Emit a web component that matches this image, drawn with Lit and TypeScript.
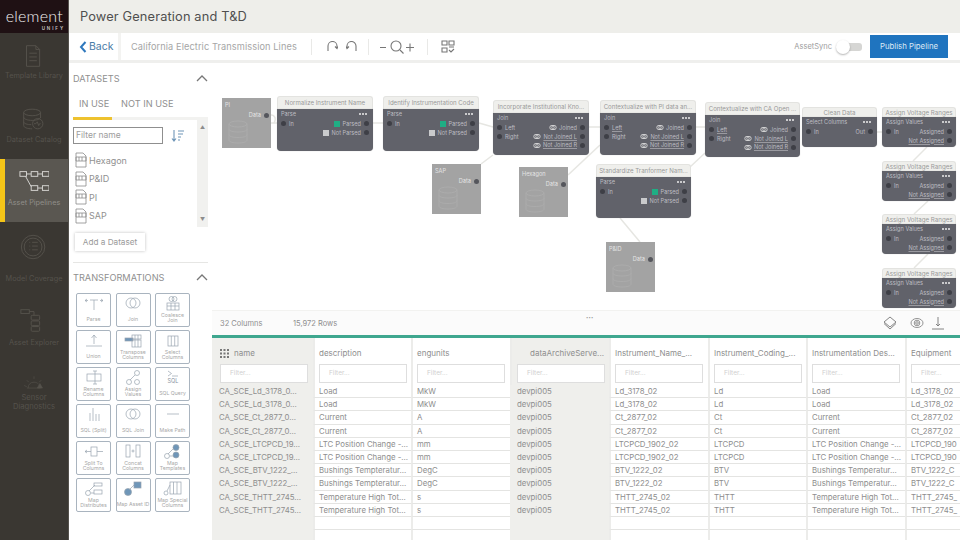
import { LitElement, html, css, svg } from 'lit';
import { customElement, property } from 'lit/decorators.js';

const FONT = css`Inter, 'Liberation Sans', sans-serif`;

// ---- left rail ----
const railItems = [
  {
    key: 't', label: ['Template Library'],
    icon: svg`<path d="M8 2h10l4 4v18H8z"/><path d="M18 2v4h4M11 10h8M11 14h8M11 18h8"/>`,
  },
  {
    key: 'd', label: ['Dataset Catalog'],
    icon: svg`<ellipse cx="14" cy="6" rx="9" ry="3.5"/><path d="M5 6v14c0 2 4 3.500 9 3.500M23 6v6M5 11c0 2 4 3.500 9 3.500s9-1.500 9-3.500M5 16c0 2 4 3 8 3"/><circle cx="20" cy="18" r="5.500"/><path d="M16 18h2l1.500-2 1.500 4 1-2h1"/>`,
  },
  {
    key: 'p', label: ['Asset Pipelines'],
    icon: svg`<rect x="1" y="3" width="7" height="5"/><rect x="13" y="3" width="7" height="5"/><rect x="25" y="3" width="7" height="5"/><path d="M8 5.500h5M20 5.500h5M7 8l6 11"/><rect x="13" y="18" width="7" height="5"/><rect x="25" y="18" width="7" height="5"/><path d="M20 20.500h5"/>`,
  },
  {
    key: 'm', label: ['Model Coverage'],
    icon: svg`<circle cx="15" cy="13" r="12.500"/><circle cx="15" cy="13" r="9.500"/><path d="M11 8h1M14 8h6M11 12h1M14 12h6M11 16h1M14 16h6"/>`,
  },
  {
    key: 'e', label: ['Asset Explorer'],
    icon: svg`<rect x="2" y="2" width="9" height="4"/><path d="M11 4h5v4"/><rect x="13" y="8" width="9" height="5" rx="1"/><rect x="13" y="14" width="9" height="5" rx="1"/><rect x="13" y="20" width="9" height="5" rx="1"/>`,
  },
  {
    key: 's', label: ['Sensor', 'Diagnostics'],
    icon: svg`<path d="M7 20c0-6 4-9 9-9 3 0 5 1 7 3M5 20h21M1 16l4 2M5 8l3 3M16 2v4M27 8l-3 3"/><path d="M25 13l4 7h-8z" fill="currentColor"/>`,
  },
];

@customElement('nav-rail')
export class NavRail extends LitElement {
  static styles = css`
    :host {
      display: block;
      width: 69px;
      height: 540px;
      background: #3a3732;
      border-right: 1px solid #55524d;
      box-sizing: border-box;
      font-family: ${FONT};
      overflow: hidden;
    }
    .logo {
      height: 33px;
      background: #1f1114;
      color: #f2f2f2;
      display: flex;
      flex-direction: column;
      align-items: flex-end;
      padding: 6px 5px 0 0;
      box-sizing: border-box;
    }
    .logo b {
      font: 300 16px/20px Lato, sans-serif;
      letter-spacing: 0.25px;
    }
    .logo i {
      font: 600 4.5px/5px ${FONT};
      letter-spacing: 1.9px;
      margin-right: -2px;
      color: #c9c5c5;
    }
    .item {
      height: 63px;
      box-sizing: border-box;
      display: flex;
      flex-direction: column;
      align-items: center;
      color: #55524c;
      font-size: 7.3px;
      line-height: 10px;
      white-space: nowrap;
      position: relative;
    }
    .item svg {
      width: 30px;
      height: 26px;
      fill: none;
      stroke: currentColor;
      stroke-width: 1;
    }
    .item.t { padding-top: 10px; gap: 2px; }
    .item.d { padding-top: 10px; gap: 3px; }
    .item.p { padding-top: 9px; gap: 4px; background: #5a5751; color: #908e89; }
    .item.p svg { color: #d8d7d4; }
    .item.p::before {
      content: '';
      position: absolute;
      left: 0;
      top: 0;
      bottom: 0;
      width: 5px;
      background: #f5c518;
    }
    .item.m { padding-top: 12px; gap: 14px; }
    .item.e { padding-top: 22px; gap: 5px; }
    .item.s { padding-top: 27px; gap: 1px; font-size: 7.6px; }
    .item span { display: block; text-align: center; }
    .item.s span { line-height: 9px; }
  `;

  render() {
    return html`
      <div class="logo"><b>element</b><i>UNIFY</i></div>
      ${railItems.map(
        (it) => html`
          <div class="item ${it.key}">
            <svg viewBox="0 0 32 26">${it.icon}</svg>
            <span>${it.label.map((l) => html`${l}<br />`)}</span>
          </div>
        `,
      )}
    `;
  }
}

// ---- datasets + transformations ----
const datasets = ['Hexagon', 'P&ID', 'PI', 'SAP'];

const blue = '#6f96b8';
const transforms = [
  { label: ['Parse'], icon: svg`<path d="M10 4v10M6 4h8M3 3l-2 1.500L3 6M17 3l2 1.500L17 6M1 4.500h3M16 4.500h3"/>` },
  { label: ['Join'], icon: svg`<circle cx="8" cy="7" r="5"/><circle cx="12" cy="7" r="5"/>` },
  { label: ['Coalesce', 'Join'], icon: svg`<circle cx="8.500" cy="3" r="2.500"/><circle cx="11.500" cy="3" r="2.500"/><rect x="4" y="7" width="12" height="7"/><path d="M8 7v7M12 7v7M4 10h12"/>` },
  { label: ['Union'], icon: svg`<path d="M2 13h16M10 11V2M7.500 5L10 2l2.500 3"/>` },
  { label: ['Transpose', 'Columns'], icon: svg`<rect x="2" y="5" width="8" height="3" fill="${blue}"/><rect x="9" y="2" width="9" height="4"/><rect x="9" y="7" width="9" height="7"/><path d="M12 2v12M15 2v12"/>` },
  { label: ['Select', 'Columns'], icon: svg`<rect x="5" y="3" width="10" height="10"/><path d="M8.300 3v10M11.700 3v10"/>` },
  { label: ['Rename', 'Columns'], icon: svg`<rect x="3" y="4" width="14" height="7"/><path d="M11 1v13M9 1h4M9 14h4"/>` },
  { label: ['Assign', 'Values'], icon: svg`<circle cx="6" cy="12" r="2.500"/><circle cx="14" cy="3" r="2.500"/><circle cx="14" cy="12" r="2.500"/><path d="M7 10l5-5"/>` },
  { label: ['SQL Query'], icon: svg`<path d="M5 1l3.500 2.500L5 6M9 6h6"/><text x="10" y="13" text-anchor="middle" font-size="5.500" fill="#8893a0" stroke="none">SQL</text>` },
  { label: ['SQL (Split)'], icon: svg`<path d="M6 14V6M9 14V1M12 14V7M15 14V7"/>` },
  { label: ['SQL Join'], icon: svg`<circle cx="8" cy="7" r="5"/><circle cx="12" cy="7" r="5"/>` },
  { label: ['Make Path'], icon: svg`<path d="M4 7h12"/>` },
  { label: ['Split To', 'Columns'], icon: svg`<rect x="7" y="3" width="6" height="9"/><path d="M1 7.500h6M13 7.500h6M3 6l-2 1.500L3 9"/>` },
  { label: ['Concat', 'Columns'], icon: svg`<rect x="3" y="1" width="4" height="12"/><rect x="13" y="1" width="4" height="12"/><path d="M8.500 7h3M10 5.500v3"/>` },
  { label: ['Map', 'Templates'], icon: svg`<circle cx="4" cy="12" r="2.500"/><path d="M5 10l6-6M11 12H7"/><circle cx="13" cy="3.500" r="3" fill="${blue}"/><circle cx="13" cy="11" r="3" fill="${blue}"/>` },
  { label: ['Map', 'Distributes'], icon: svg`<circle cx="4" cy="12" r="2.500"/><path d="M5 10l6-6"/><rect x="10" y="2" width="8" height="3"/><rect x="10" y="9" width="8" height="4"/><path d="M7 12h3"/>` },
  { label: ['Map Asset ID'], icon: svg`<circle cx="5" cy="11" r="3.500" fill="${blue}"/><path d="M6 9l5-5"/><rect x="11" y="1" width="7" height="6" fill="${blue}"/>` },
  { label: ['Map Special', 'Columns'], icon: svg`<circle cx="3" cy="12" r="2"/><path d="M4 10l3-6"/><rect x="7" y="1" width="11" height="12"/><path d="M10.500 1v12M14 1v12"/>` },
];

@customElement('dataset-panel')
export class DatasetPanel extends LitElement {
  static styles = css`
    :host {
      display: block;
      width: 143px;
      box-sizing: border-box;
      padding: 0 4px 0 4px;
      font-family: ${FONT};
      color: #9a9a9a;
      background: #fff;
    }
    .section {
      display: flex;
      justify-content: space-between;
      align-items: center;
      font-size: 9.2px;
      height: 12px;
      color: #8f8f8f;
    }
    .section svg { width: 12px; height: 7px; fill: none; stroke: #777; stroke-width: 1.300; }
    .datasets { padding-top: 9px; }
    .tabs {
      display: flex;
      font-size: 9.2px;
      margin-top: 12px;
      height: 21px;
      align-items: flex-start;
      padding-top: 2px;
      box-sizing: border-box;
      color: #8f8f8f;
    }
    .tabs span:first-child { width: 48px; padding-left: 6px; box-sizing: border-box; }
    .bar { display: flex; height: 3px; background: #f2f2f0; width: 135px; }
    .bar i { width: 39px; background: #eec22f; }
    .list { display: flex; width: 135px; height: 107px; }
    .list-main { flex: 1; padding-top: 7px; }
    .filter { display: flex; align-items: center; gap: 8px; }
    .filter div {
      width: 90px;
      height: 17px;
      box-sizing: border-box;
      border: 1px solid #8f8f8f;
      font-size: 8.5px;
      line-height: 15px;
      padding-left: 2px;
      color: #9c9c9c;
    }
    .filter svg { width: 14px; height: 14px; fill: none; stroke: #6f96b8; stroke-width: 1.100; }
    .ds { display: flex; align-items: center; gap: 2px; font-size: 9px; height: 18.500px; color: #919191; padding-left: 2px; }
    .ds-list { margin-top: 7px; }
    .ds svg { width: 12px; height: 16px; fill: #fff; stroke: #8a8a8a; stroke-width: 0.800; }
    .scroll {
      width: 11px;
      background: #f1f1ef;
      display: flex;
      flex-direction: column;
      justify-content: space-between;
      align-items: center;
      padding: 5px 0;
      box-sizing: border-box;
      color: #8c8c8c;
      font-size: 5px;
      line-height: 5px;
    }
    .add {
      display: inline-block;
      margin: 6px 0 0 2px;
      width: 70px;
      height: 18px;
      line-height: 18px;
      text-align: center;
      font-size: 8.2px;
      color: #9a9a9a;
      box-shadow: 0 0 3px rgba(0, 0, 0, 0.25);
    }
    hr { border: 0; border-top: 1px solid #e6e6e4; margin: 11px 0 0; width: 135px; }
    .trans { margin-top: 8px; }
    .grid {
      display: grid;
      grid-template-columns: repeat(3, 35px);
      grid-auto-rows: 34px;
      column-gap: 4.500px;
      row-gap: 3px;
      margin: 10px 0 0 3px;
    }
    .tile {
      border: 1px solid #a9b4bf;
      border-radius: 2px;
      box-sizing: border-box;
      display: flex;
      flex-direction: column;
      align-items: center;
      padding-top: 2px;
      font-size: 5.2px;
      line-height: 5.500px;
      color: #a8a8a8;
      text-align: center;
      white-space: nowrap;
      overflow: hidden;
    }
    .tile svg { width: 20px; height: 15px; flex: none; fill: none; stroke: #98a3af; stroke-width: 0.700; margin-bottom: 1.500px; }
    .tile span.single { margin-top: 4px; }
  `;

  render() {
    return html`
      <div class="datasets section">
        <span>DATASETS</span>
        <svg viewBox="0 0 12 7"><path d="M1 6l5-5 5 5" /></svg>
      </div>
      <div class="tabs"><span>IN USE</span><span>NOT IN USE</span></div>
      <div class="bar"><i></i></div>
      <div class="list">
        <div class="list-main">
          <div class="filter">
            <div>Filter name</div>
            <svg viewBox="0 0 14 14"><path d="M3 1v11M1 9.500L3 12l2-2.500M7 2h6M7 5h5M7 8h3M7 11h2" /></svg>
          </div>
          <div class="ds-list">
            ${datasets.map(
              (d) => html`
                <div class="ds">
                  <svg viewBox="0 0 12 16">
                    <path d="M1 1h7l3 3v11H1z" />
                    <path d="M1 5h10v4H1zM4 5v4M7 5v4" fill="none" />
                  </svg>
                  ${d}
                </div>
              `,
            )}
          </div>
        </div>
        <div class="scroll"><span>▲</span><span>▼</span></div>
      </div>
      <div class="add">Add a Dataset</div>
      <hr />
      <div class="trans section">
        <span>TRANSFORMATIONS</span>
        <svg viewBox="0 0 12 7"><path d="M1 6l5-5 5 5" /></svg>
      </div>
      <div class="grid">
        ${transforms.map(
          (t) => html`
            <div class="tile">
              <svg viewBox="0 0 20 15">${t.icon}</svg>
              ${t.label.map((l) => html`<span class=${t.label.length === 1 ? 'single' : ''}>${l}</span>`)}
            </div>
          `,
        )}
      </div>
    `;
  }
}

// ---- pipeline canvas ----
type Port = { text: string; mark?: 'ok' | 'no' | 'venn'; under?: boolean };
type FlowNode = {
  x: number; y: number; w: number; h: number; small?: boolean;
  title: string; kind: string; left: Port[]; right: Port[];
};

const parsePorts = {
  kind: 'Parse',
  left: [{ text: 'In' }],
  right: [{ text: 'Parsed', mark: 'ok' }, { text: 'Not Parsed', mark: 'no' }] as Port[],
};
const joinRight: Port[] = [
  { text: 'Joined', mark: 'venn' },
  { text: 'Not Joined L', mark: 'venn', under: true },
  { text: 'Not Joined R', mark: 'venn', under: true },
];
const assign = {
  x: 882, w: 74, h: 30, small: true, title: 'Assign Voltage Ranges', kind: 'Assign Values',
  left: [{ text: 'In' }],
  right: [{ text: 'Assigned' }, { text: 'Not Assigned', under: true }] as Port[],
};

const nodes: FlowNode[] = [
  { x: 277, y: 96, w: 96, h: 42, title: 'Normalize Instrument Name', ...parsePorts },
  { x: 383, y: 96, w: 96, h: 42, title: 'Identify Instrumentation Code', ...parsePorts },
  { x: 493, y: 100, w: 96, h: 42, title: 'Incorporate Institutional Kno...', kind: 'Join', left: [{ text: 'Left' }, { text: 'Right' }], right: joinRight },
  { x: 600, y: 100, w: 96, h: 42, title: 'Contextualize with PI data an...', kind: 'Join', left: [{ text: 'Left', under: true }, { text: 'Right' }], right: joinRight },
  { x: 705, y: 102, w: 95, h: 42, title: 'Contextualize with CA Open ...', kind: 'Join', left: [{ text: 'Left', under: true }, { text: 'Right' }], right: joinRight },
  { x: 596, y: 164, w: 95, h: 41, title: 'Standardize Tranformer Nam...', ...parsePorts },
  { x: 802, y: 107, w: 75, h: 30, small: true, title: 'Clean Data', kind: 'Select Columns', left: [{ text: 'In' }], right: [{ text: 'Out' }] },
  { ...assign, y: 107 },
  { ...assign, y: 161 },
  { ...assign, y: 214 },
  { ...assign, y: 268 },
];

const sources = [
  { x: 222, y: 98, name: 'PI' },
  { x: 432, y: 164, name: 'SAP' },
  { x: 519, y: 167, name: 'Hexagon' },
  { x: 606, y: 242, name: 'P&ID' },
];

const edges = [
  [271, 123, 277, 123],
  [373, 123, 383, 123],
  [479, 123, 493, 127],
  [481, 164, 493, 155],
  [589, 127, 600, 127],
  [568, 175, 600, 145],
  [696, 127, 705, 127],
  [690, 167, 705, 153],
  [877, 132, 882, 132],
  [927, 147, 913, 161],
  [928, 201, 914, 214],
  [928, 254, 914, 268],
  [620, 218, 640, 242],
];

@customElement('pipeline-canvas')
export class PipelineCanvas extends LitElement {
  static styles = css`
    :host {
      display: block;
      position: relative;
      height: 247px;
      background: #fff;
      overflow: hidden;
      font-family: ${FONT};
    }
    .edges { position: absolute; inset: 0; width: 748px; height: 247px; }
    .edges line, .edges path { stroke: #e6e6e2; stroke-width: 1.500; fill: none; }
    .node { position: absolute; }
    .title {
      height: 13px;
      background: #efefec;
      border: 1px solid #e3e3e0;
      border-bottom: 0;
      border-radius: 3px 3px 0 0;
      box-sizing: border-box;
      font-size: 6.100px;
      line-height: 12px;
      text-align: center;
      color: #999;
      white-space: nowrap;
      overflow: hidden;
    }
    .node.small .title { height: 10px; line-height: 10px; font-size: 6.200px; }
    .body {
      background: #61626a;
      border-radius: 0 0 4px 4px;
      box-shadow: 0 0 1px rgba(0, 0, 0, 0.3);
      color: #bdbdc2;
      font-size: 5.600px;
      padding: 1px 4px 0;
      box-sizing: border-box;
    }
    .top { display: flex; justify-content: space-between; height: 9.500px; line-height: 9px; }
    .dots { display: flex; gap: 1px; padding: 3px 2px 0 0; }
    .dots i { width: 2px; height: 2px; border-radius: 50%; background: #eee; }
    .ports { display: flex; justify-content: space-between; }
    .col { display: flex; flex-direction: column; }
    .col.r { align-items: flex-end; }
    .port { display: flex; align-items: center; gap: 3px; height: 8.700px; }
    .dot { width: 5px; height: 5px; border-radius: 50%; background: #3e3f46; }
    .u { text-decoration: underline; text-decoration-thickness: 0.400px; text-decoration-color: #9a9aa0; }
    .ok { width: 6px; height: 6px; background: #1fae84; }
    .no { width: 6px; height: 6px; background: #c9cacc; }
    .venn { width: 8px; height: 5px; fill: none; stroke: #e2e2e2; stroke-width: 0.800; margin-right: -1px; }
    .src {
      position: absolute;
      width: 49px;
      height: 50px;
      background: #a3a3a3;
      color: #e4e4e4;
      font-size: 5.600px;
      box-sizing: border-box;
      padding: 4px 3px;
    }
    .src .data { display: flex; justify-content: flex-end; align-items: center; gap: 3px; margin: 4px -1px 0 0; }
    .src svg { position: absolute; left: 6px; bottom: 4px; width: 20px; height: 24px; fill: none; stroke: #adadad; stroke-width: 0.800; }
    .src .dot { background: #55565c; }
  `;

  private renderPort(p: Port, right: boolean) {
    const mark =
      p.mark === 'venn'
        ? html`<svg class="venn" viewBox="0 0 8 5"><circle cx="3" cy="2.500" r="2.200" /><circle cx="5" cy="2.500" r="2.200" /></svg>`
        : p.mark
          ? html`<i class=${p.mark}></i>`
          : '';
    const label = html`<span class=${p.under ? 'u' : ''}>${p.text}</span>`;
    return right
      ? html`<div class="port">${mark}${label}<i class="dot"></i></div>`
      : html`<div class="port"><i class="dot"></i>${label}</div>`;
  }

  render() {
    return html`
      <svg class="edges" viewBox="212 63 748 247">
        ${edges.map((e) => svg`<line x1=${e[0]} y1=${e[1]} x2=${e[2]} y2=${e[3]}></line>`)}
        <path d="M268 116c6-3 9 2 6 7" />
      </svg>
      ${sources.map(
        (s) => html`
          <div class="src" style="left:${s.x - 212}px;top:${s.y - 63}px">
            ${s.name}
            <div class="data">Data<i class="dot"></i></div>
            <svg viewBox="0 0 20 24">
              <ellipse cx="10" cy="4" rx="9" ry="3" />
              <path d="M1 4v16c0 2 4 3 9 3s9-1 9-3V4M1 9c0 2 4 3 9 3s9-1 9-3M1 14.500c0 2 4 3 9 3s9-1 9-3" />
            </svg>
          </div>
        `,
      )}
      ${nodes.map(
        (n) => html`
          <div class="node ${n.small ? 'small' : ''}" style="left:${n.x - 212}px;top:${n.y - 63}px;width:${n.w}px">
            <div class="title">${n.title}</div>
            <div class="body" style="height:${n.h}px">
              <div class="top"><span>${n.kind}</span><span class="dots"><i></i><i></i><i></i></span></div>
              <div class="ports">
                <div class="col">${n.left.map((p) => this.renderPort(p, false))}</div>
                <div class="col r">${n.right.map((p) => this.renderPort(p, true))}</div>
              </div>
            </div>
          </div>
        `,
      )}
    `;
  }
}

// ---- data preview table ----
const pick = (a: string[]) => [a[0], a[0], a[1], a[1], a[2], a[2], a[3], a[3], a[4], a[4]];

const columns = [
  { name: 'name', shade: true, cells: pick(['CA_SCE_Ld_3178_0...', 'CA_SCE_Ct_2877_0...', 'CA_SCE_LTCPCD_19...', 'CA_SCE_BTV_1222_...', 'CA_SCE_THTT_2745...']) },
  { name: 'description', cells: pick(['Load', 'Current', 'LTC Position Change -...', 'Bushings Tempteratur...', 'Temperature High Tot...']) },
  { name: 'engunits', cells: pick(['MkW', 'A', 'mm', 'DegC', 's']) },
  { name: 'dataArchiveServe...', shade: true, cells: pick(['devpi005', 'devpi005', 'devpi005', 'devpi005', 'devpi005']) },
  { name: 'Instrument_Name_...', cells: pick(['Ld_3178_02', 'Ct_2877_02', 'LTCPCD_1902_02', 'BTV_1222_02', 'THTT_2745_02']) },
  { name: 'Instrument_Coding_...', cells: pick(['Ld', 'Ct', 'LTCPCD', 'BTV', 'THTT']) },
  { name: 'Instrumentation Des...', cells: pick(['Load', 'Current', 'LTC Position Change -...', 'Bushings Temperatur...', 'Temperature High Tot...']) },
  { name: 'Equipment', cells: pick(['Ld_3178_02', 'Ct_2877_02', 'LTCPCD_190', 'BTV_1222_C', 'THTT_2745_']) },
];

const rowCount = 12;

@customElement('data-table')
export class DataTable extends LitElement {
  static styles = css`
    :host {
      display: block;
      height: 230px;
      overflow: hidden;
      font-family: ${FONT};
      color: #8e8e8e;
      background: #fff;
    }
    .stats {
      height: 25px;
      background: #fbfbfb;
      border-top: 1px solid #f2f2f0;
      box-sizing: border-box;
      display: flex;
      align-items: center;
      font-size: 7.500px;
      padding: 0 15px 0 8px;
      position: relative;
    }
    .stats span:first-child { width: 73px; }
    .more { position: absolute; left: 374px; top: 4px; font-size: 4px; line-height: 5px; letter-spacing: 0.300px; color: #999; }
    .tools { margin-left: auto; display: flex; gap: 13px; align-items: center; }
    .tools svg { width: 14px; height: 14px; fill: none; stroke: #777; stroke-width: 0.900; }
    .tools svg.eye { stroke: #888; margin-right: -6px; }
    .green { height: 3px; background: #3fa78f; }
    .table {
      display: grid;
      grid-template-columns: 101px 98px 99px 99px 99px 98px 99px 60px;
      grid-template-rows: 47px repeat(${rowCount}, 13.200px);
      width: 748px;
    }
    .head {
      border-left: 2px solid #ececea;
      box-sizing: border-box;
      padding: 8px 4px 0 4px;
      font-size: 8px;
      line-height: 12px;
      white-space: nowrap;
      overflow: hidden;
    }
    .head:first-child { border-left: 0; padding-left: 8px; }
    .head.shade { background: #efefec; }
    .head .label { height: 14px; margin-bottom: 4px; display: flex; gap: 4px; align-items: center; }
    .head.archive .label { padding-left: 13px; }
    .head.archive { padding-left: 5px; }
    .head svg { width: 10px; height: 9px; fill: #777; }
    .input {
      height: 19px;
      width: 88px;
      background: #fff;
      border: 1px solid #dedede;
      box-sizing: border-box;
      font-size: 6.500px;
      line-height: 17px;
      padding-left: 9px;
      color: #cfcfcf;
    }
    .cell {
      border-left: 2px solid #ececea;
      border-bottom: 1px solid #e4e4e2;
      box-sizing: border-box;
      padding-left: 4px;
      font-size: 7.800px;
      line-height: 12px;
      white-space: nowrap;
      overflow: hidden;
    }
    .cell.shade { background: #efefec; border-left: 0; border-bottom: 0; padding-left: 7px; }
  `;

  render() {
    const rows = Array.from({ length: rowCount }, (_, i) => i);
    return html`
      <div class="stats">
        <span>32 Columns</span><span>15,972 Rows</span>
        <span class="more">•••</span>
        <div class="tools">
          <svg viewBox="0 0 14 14"><path d="M7 1l6 5-6 5-6-5zM1 7.500l6 5.500 6-5.500" /></svg>
          <svg class="eye" viewBox="0 0 14 14"><ellipse cx="7" cy="7" rx="6" ry="4.500" /><circle cx="7" cy="7" r="2.800" /><circle cx="7" cy="7" r="1.300" /></svg>
          <svg viewBox="0 0 14 14"><path d="M7 1v9M5 8l2 2 2-2M1 13h12" /></svg>
        </div>
      </div>
      <div class="green"></div>
      <div class="table">
        ${columns.map(
          (c) => html`
            <div class="head ${c.shade ? 'shade' : ''} ${c.name.startsWith('dataArchive') ? 'archive' : ''}">
              <div class="label">
                ${c.name === 'name'
                  ? html`<svg viewBox="0 0 10 9">
                      ${[0, 3.5, 7].flatMap((y) => [0, 3.5, 7].map((x) => svg`<rect x=${x} y=${y} width="2" height="2"></rect>`))}
                    </svg>`
                  : ''}
                ${c.name}
              </div>
              <div class="input">Filter...</div>
            </div>
          `,
        )}
        ${rows.map((r) =>
          columns.map((c) => html`<div class="cell ${c.shade ? 'shade' : ''}">${c.cells[r] ?? ''}</div>`),
        )}
      </div>
    `;
  }
}

// ---- page ----
@customElement('app-root')
export class AppRoot extends LitElement {
  @property() pipeline = 'California Electric Transmission Lines';

  static styles = css`
    :host {
      display: flex;
      width: 960px;
      height: 540px;
      overflow: hidden;
      font-family: ${FONT};
      background: #fff;
    }
    .main { flex: 1; min-width: 0; display: flex; flex-direction: column; }
    header {
      height: 33px;
      background: #eeeeea;
      color: #4f4f4f;
      font-size: 12.800px;
      line-height: 33px;
      padding-left: 11px;
      letter-spacing: 0.150px;
    }
    .toolbar {
      height: 30px;
      display: flex;
      align-items: center;
      background: #fff;
      border-bottom: 3px solid #efefed;
      box-sizing: border-box;
      color: #a6a6a6;
      position: relative;
    }
    .back {
      width: 52px;
      height: 100%;
      box-sizing: border-box;
      display: flex;
      align-items: center;
      gap: 2px;
      padding-left: 10px;
      color: #4a7ba6;
      font-size: 10.500px;
      border-right: 3px solid #f3f3f1;
    }
    .back svg { width: 8px; height: 12px; fill: none; stroke: #2f78bd; stroke-width: 2; }
    .name { width: 190px; padding-left: 10px; box-sizing: border-box; font-size: 9.200px; white-space: nowrap; letter-spacing: 0.100px; }
    .sep { width: 1px; height: 16px; background: #e9e9e7; }
    .ico { fill: none; stroke: #777; stroke-width: 1.100; }
    .undo { display: flex; gap: 8px; padding: 0 11px 0 15px; }
    .undo svg { width: 11px; height: 11px; }
    .zoom { display: flex; padding: 0 13px 0 11px; align-items: center; }
    .zoom svg { width: 34px; height: 14px; }
    .qr { padding: 0 13px; display: flex; }
    .qr svg { width: 14px; height: 13px; }
    .sync { margin-left: auto; font-size: 7.500px; color: #9c9c9c; }
    .toggle {
      width: 26px;
      height: 14px;
      margin: 0 8px 0 4px;
      position: relative;
    }
    .toggle::before {
      content: '';
      position: absolute;
      left: 6px;
      top: 3px;
      width: 20px;
      height: 8px;
      border-radius: 3px;
      background: #d6d6d4;
    }
    .toggle::after {
      content: '';
      position: absolute;
      left: 0;
      top: 0;
      width: 14px;
      height: 14px;
      border-radius: 50%;
      background: #fff;
      box-shadow: 0 1px 2px rgba(0, 0, 0, 0.3);
    }
    .publish {
      width: 78px;
      height: 23px;
      margin-right: 12px;
      background: #1f74bf;
      color: #dbe8f4;
      font-size: 7.800px;
      line-height: 23px;
      text-align: center;
    }
    .content { flex: 1; display: flex; min-height: 0; }
    .right { flex: 1; min-width: 0; display: flex; flex-direction: column; }
  `;

  render() {
    return html`
      <nav-rail></nav-rail>
      <div class="main">
        <header>Power Generation and T&amp;D</header>
        <div class="toolbar">
          <div class="back"><svg viewBox="0 0 8 12"><path d="M6.500 1L2 6l4.500 5" /></svg>Back</div>
          <div class="name">${this.pipeline}</div>
          <i class="sep"></i>
          <div class="undo">
            <svg class="ico" viewBox="0 0 11 11"><path d="M1 10V5a4.500 4.500 0 0 1 9 0v2M8 5.500l2 2 1-2" /></svg>
            <svg class="ico" viewBox="0 0 11 11"><path d="M10 10V5a4.500 4.500 0 0 0-9 0v2M3 5.500l-2 2-1-2" /></svg>
          </div>
          <i class="sep"></i>
          <div class="zoom">
            <svg class="ico" viewBox="0 0 34 14">
              <path d="M0 7.500h6M20 10l3.500 3.500M26 7.500h8M30 3.500v8" />
              <circle cx="16" cy="6" r="5" />
            </svg>
          </div>
          <i class="sep"></i>
          <div class="qr">
            <svg class="ico" viewBox="0 0 14 13">
              <path d="M1 1h5v4H1zM8 1h5v4H8zM1 8h5v4H1zM8 7h5M8 10l2 2 3-3" />
            </svg>
          </div>
          <span class="sync">AssetSync</span>
          <div class="toggle"></div>
          <div class="publish">Publish Pipeline</div>
        </div>
        <div class="content">
          <dataset-panel></dataset-panel>
          <div class="right">
            <pipeline-canvas></pipeline-canvas>
            <data-table></data-table>
          </div>
        </div>
      </div>
    `;
  }
}
